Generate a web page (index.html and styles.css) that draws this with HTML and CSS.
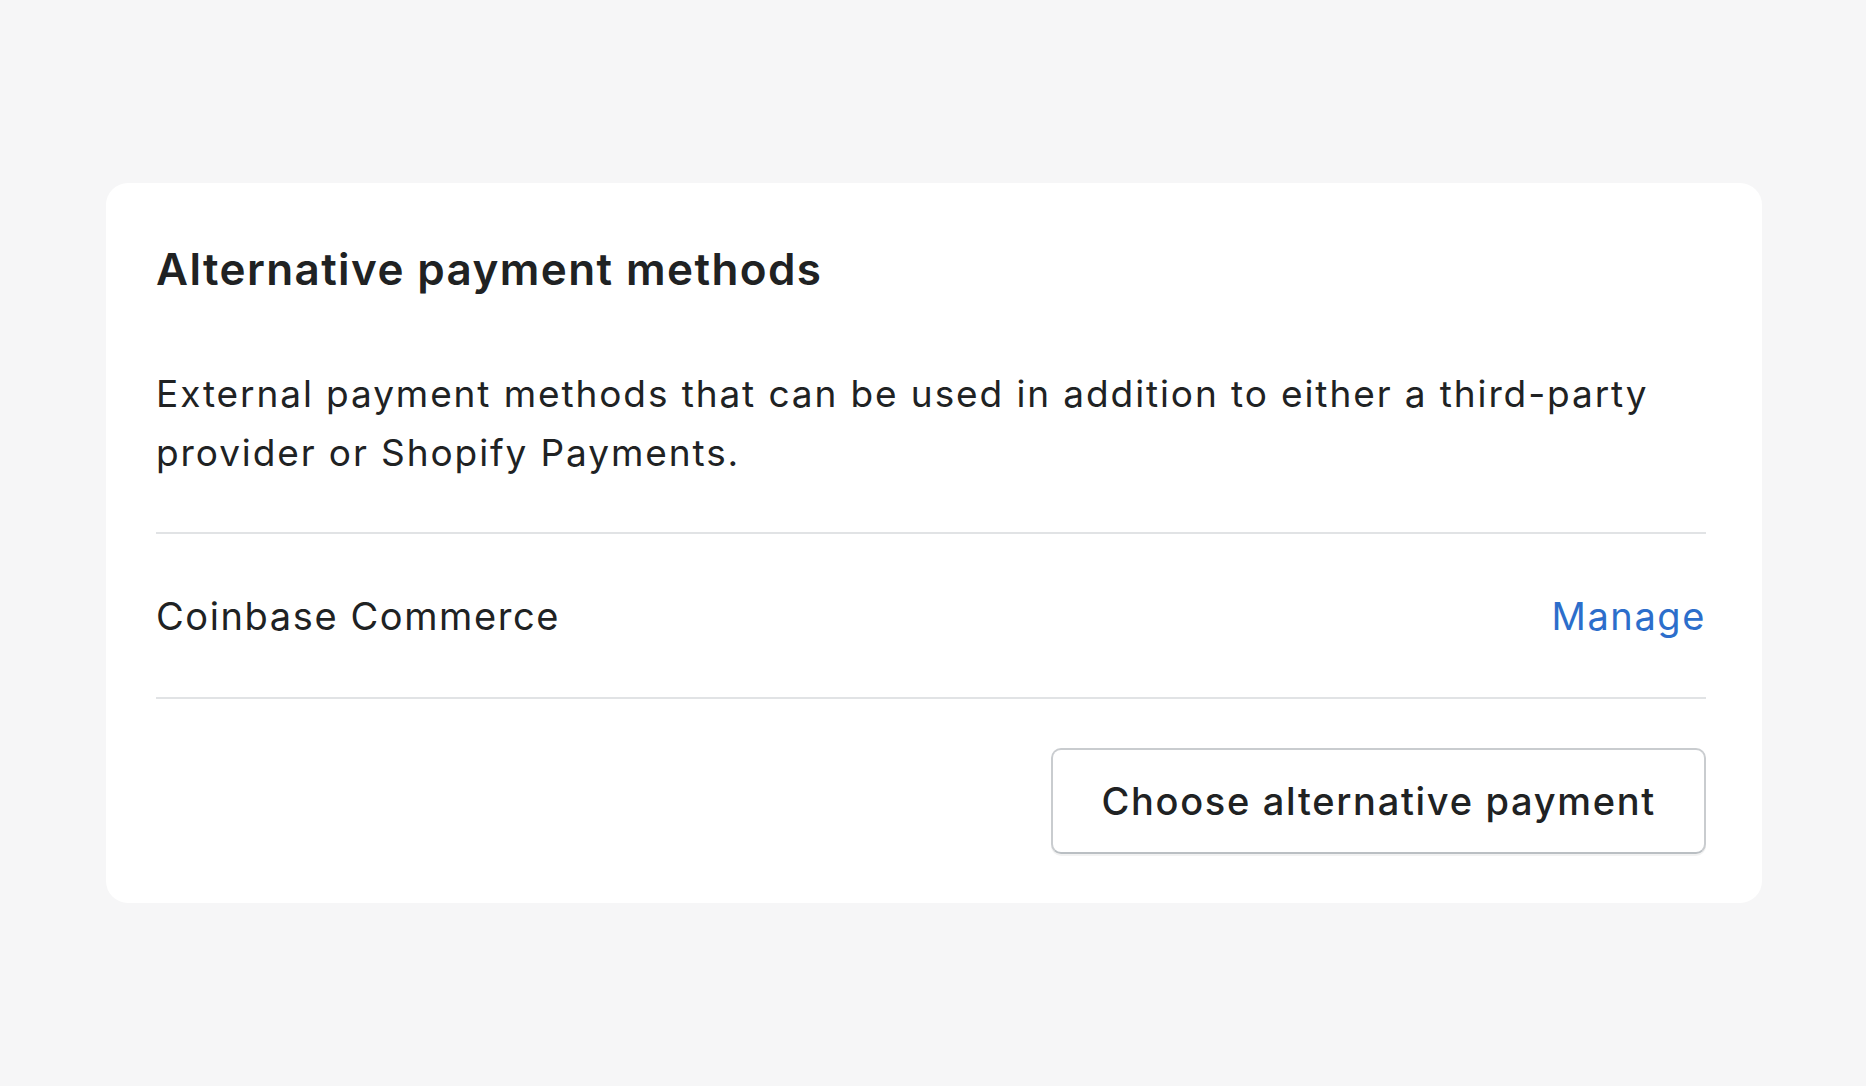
FILE: index.html
```html
<!DOCTYPE html>
<html lang="en">
<head>
  <meta charset="UTF-8">
  <title>Alternative payment methods</title>
  <meta name="viewport" content="width=device-width, initial-scale=1.0">
  <link rel="stylesheet" href="styles.css">
</head>
<body>
  <div class="card">
    <h2 class="card-title">Alternative payment methods</h2>
    <p class="card-text">External payment methods that can be used in addition to either a third-party provider or Shopify Payments.</p>

    <div class="method-row">
      <span class="method-name">Coinbase Commerce</span>
      <a href="#" class="manage-link">Manage</a>
    </div>

    <div class="card-footer">
      <button class="btn">Choose alternative payment</button>
    </div>
  </div>
</body>
</html>
```

FILE: styles.css
```css
html, body { margin: 0; padding: 0; }
body { font-family: Inter, "Noto Sans", sans-serif; background: #f6f6f7; color: #202223; padding: 183px 104px 0 106px; }
.card { background: #fff; border-radius: 22px; padding: 60px 56px 49px 50px; }
.card-title { margin: 0; font-size: 44px; line-height: 53px; font-weight: 600; letter-spacing: 1.4px; }
.card-text { margin: 68px 0 0; font-size: 37px; line-height: 59px; letter-spacing: 1.9px; padding-bottom: 50px; border-bottom: 2px solid #e1e3e5; }
.method-row { display: flex; justify-content: space-between; align-items: center; height: 163px; border-bottom: 2px solid #e1e3e5; font-size: 38px; letter-spacing: 1.6px; }
.manage-link { color: #2c6ecb; text-decoration: none; }
.card-footer { display: flex; justify-content: flex-end; padding-top: 49px; }
.btn { font-family: inherit; font-size: 38px; font-weight: 500; letter-spacing: 1.7px; color: #202223; background: #fff; border: 2px solid #c9cccf; border-bottom-color: #babfc3; border-radius: 10px; height: 106px; padding: 0 48px; box-shadow: 0 2px 0 rgba(0,0,0,0.05); }
```
